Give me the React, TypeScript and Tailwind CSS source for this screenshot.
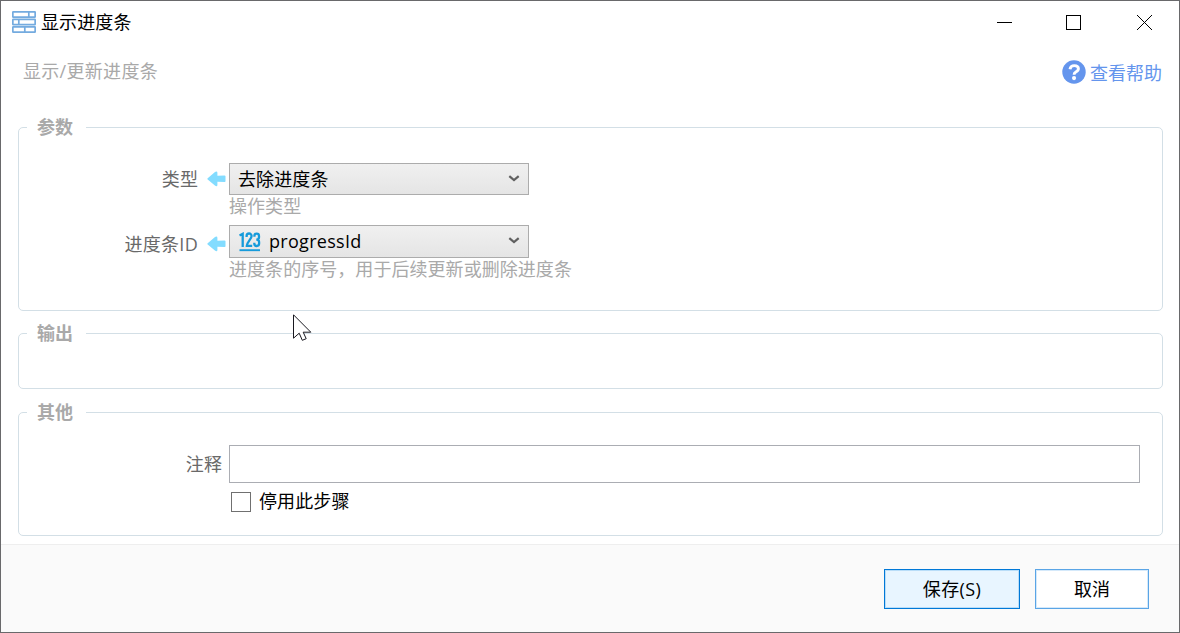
import type { ReactNode } from "react";

interface GroupProps {
  title: string;
  className?: string;
  children?: ReactNode;
}

// Fieldset-like panel: the title sits in a gap of the top border
function Group({ title, className = "", children }: GroupProps) {
  return (
    <section className={`relative rounded-[5px] border border-[#d3dfe6] ${className}`}>
      <h2 className="absolute -top-[14px] left-[8px] w-[59px] bg-white pl-[10px] text-[18px] leading-[27px] font-bold text-[#a9a9a9]">
        {title}
      </h2>
      {children}
    </section>
  );
}

function StepIcon() {
  return (
    <svg width="24" height="22" viewBox="0 0 24 22" fill="none" stroke="#74abdf" strokeWidth="1.7" className="shrink-0">
      <rect x="0.85" y="0.85" width="22.3" height="5.3" rx="0.4" />
      <rect x="0.85" y="8.35" width="22.3" height="5.3" rx="0.4" />
      <rect x="0.85" y="15.85" width="22.3" height="5.3" rx="0.4" />
      <path d="M16.8 1v5M6.8 8.5v5M12.8 16v5" />
    </svg>
  );
}

function HelpIcon() {
  return (
    <svg width="24" height="24" viewBox="0 0 512 512" fill="#6495ed">
      <circle cx="256" cy="256" r="250" />
      <path
        d="M170 197C178 145 214 119 262 119C317 119 350 148 350 187C350 231 316 246 289 261C267 273 258 285 258 316"
        fill="none"
        stroke="#fff"
        strokeWidth="62"
      />
      <circle cx="257" cy="386" r="44" fill="#fff" />
    </svg>
  );
}

function InputArrow() {
  return (
    <svg width="19" height="16" viewBox="0 0 19 16" fill="#83dcff" className="shrink-0">
      <path d="M.7 7.2 8 .9Q10.3-.3 10.4 1.8V4.7L17.5 4.4Q18.5 4.4 18.5 5.3V10.2Q18.5 11.1 17.5 11L10.4 10.8V13.9Q10.3 16 8.2 14.8L.7 8.6Q0 7.9.7 7.2Z" />
    </svg>
  );
}

function NumberIcon() {
  return (
    <svg width="22" height="20" viewBox="0 0 22 20" fill="none" stroke="#169bdb" strokeWidth="2.3" className="shrink-0">
      <path d="M0.5 3.5 3.7 1.8V15M7.6 5V4a2.5 2.5 0 0 1 5 0c0 3.1-4.7 6-4.8 9.9h5.4M15.4 4.7V4a2.3 2.3 0 0 1 4.6 0v1.2c0 1.6-1 2.4-2.7 2.4 1.9 0 2.8.9 2.8 2.5v1.5a2.4 2.4 0 0 1-4.8 0V10.8" />
      <path d="M0.5 18.2h20.5" strokeWidth="1.9" />
    </svg>
  );
}

function Chevron() {
  return (
    <svg width="12" height="8" viewBox="0 0 12 8" fill="none" stroke="#606060" strokeWidth="2.2" className="absolute top-[11px] right-[8px]">
      <path d="M1.3 1.2 6 5.1 10.7 1.2" />
    </svg>
  );
}

interface FieldProps {
  label: string;
  hint: string;
  labelClassName?: string;
  selectClassName: string;
  children: ReactNode;
}

function SelectField({ label, hint, labelClassName = "", selectClassName, children }: FieldProps) {
  return (
    <div>
      <div className="flex items-center">
        <div className={`flex w-[210px] items-center justify-end gap-[9px] pr-[3px] ${labelClassName}`}>
          <span>{label}</span>
          <InputArrow />
        </div>
        <button
          className={`relative flex w-[300px] items-center border border-[#acacac] bg-linear-to-b from-[#f0f0f0] to-[#e5e5e5] text-black ${selectClassName}`}
        >
          {children}
          <Chevron />
        </button>
      </div>
      <p className="-mt-[2px] h-[32px] pl-[210px] tracking-[0.05px] text-[#a9a9a9]">{hint}</p>
    </div>
  );
}

function WindowControls() {
  return (
    <div className="ml-auto flex pr-[26px]">
      <svg width="16" height="16" viewBox="0 0 16 16" stroke="#000" shapeRendering="crispEdges">
        <path d="M0 8.5h15" />
      </svg>
      <svg width="16" height="16" viewBox="0 0 16 16" fill="none" stroke="#000" shapeRendering="crispEdges" className="ml-[53px]">
        <rect x="0.5" y="1.5" width="14" height="14" />
      </svg>
      <svg width="16" height="16" viewBox="0 0 16 16" stroke="#000" className="ml-[55px]">
        <path d="M0 1l15 15M15 1L0 16" />
      </svg>
    </div>
  );
}

function Cursor() {
  return (
    <svg width="19" height="28" viewBox="0 0 19 28" fill="#fff" stroke="#18181f" strokeWidth="1" className="absolute top-[313px] left-[292px] z-10">
      <path d="M.5 .8V24.2L6.2 19.2 9.3 26.3 13.2 24.7 10.2 18.2H17.8Z" />
    </svg>
  );
}

export default function App() {
  return (
    <div className="relative flex h-[633px] w-[1180px] flex-col overflow-hidden border border-[#69696b] bg-white font-['Open_Sans','Noto_Sans_CJK_SC',sans-serif] text-[18px] leading-[27px] tracking-[0.1px] text-[#696969]">
      {/* Title bar */}
      <header className="flex h-[42px] items-center pl-[11px] text-black">
        <StepIcon />
        <span className="ml-[5px]">显示进度条</span>
        <WindowControls />
      </header>

      {/* Summary and help link */}
      <div className="flex h-[84px] items-start justify-between pt-[15px] pr-[17px] pl-[22px]">
        <p className="tracking-[0.3px] text-[#a9a9a9]">显示/更新进度条</p>
        <a className="flex items-center gap-[4px] tracking-normal text-[#6495ed]">
          <HelpIcon />
          <span className="pt-[2px] -mb-[2px]">查看帮助</span>
        </a>
      </div>

      <main className="flex flex-col pr-[16px] pl-[17px]">
        <Group title="参数" className="h-[184px] pt-[35px]">
          <SelectField label="类型" hint="操作类型" selectClassName="h-[32px] pl-[8px]">
            去除进度条
          </SelectField>
          <SelectField
            label="进度条ID"
            hint="进度条的序号，用于后续更新或删除进度条"
            labelClassName="pt-[5px] tracking-[0.3px]"
            selectClassName="h-[33px] pl-[9px]"
          >
            <NumberIcon />
            <span className="ml-[8px] tracking-[0.3px]">progressId</span>
          </SelectField>
        </Group>

        <Group title="输出" className="mt-[22px] h-[56px]" />

        <Group title="其他" className="mt-[23px] h-[124px] pt-[32px]">
          <div className="flex items-center">
            <span className="w-[203px] text-right">注释</span>
            <input className="ml-[7px] h-[38px] w-[911px] border border-[#abadb3] px-2 text-black outline-none" />
          </div>
          <label className="mt-[5px] flex items-center pl-[212px] text-black">
            <span className="mr-[8px] h-[20px] w-[20px] border border-[#707070] bg-white" />
            停用此步骤
          </label>
        </Group>
      </main>

      <footer className="mt-auto flex h-[88px] items-start justify-end gap-[15px] border-t border-[#eeeeee] bg-[#fafafa] pt-[24px] pr-[30px] text-black">
        <button className="h-[40px] w-[136px] border border-[#0078d7] bg-[#e8f5ff] tracking-[0.4px] shadow-[inset_0_0_0_1px_#b9ddf8]">
          保存(S)
        </button>
        <button className="h-[40px] w-[114px] border border-[#5aa5e6] bg-white shadow-[inset_0_0_0_1px_#d5e9fa]">取消</button>
      </footer>

      <Cursor />
    </div>
  );
}
